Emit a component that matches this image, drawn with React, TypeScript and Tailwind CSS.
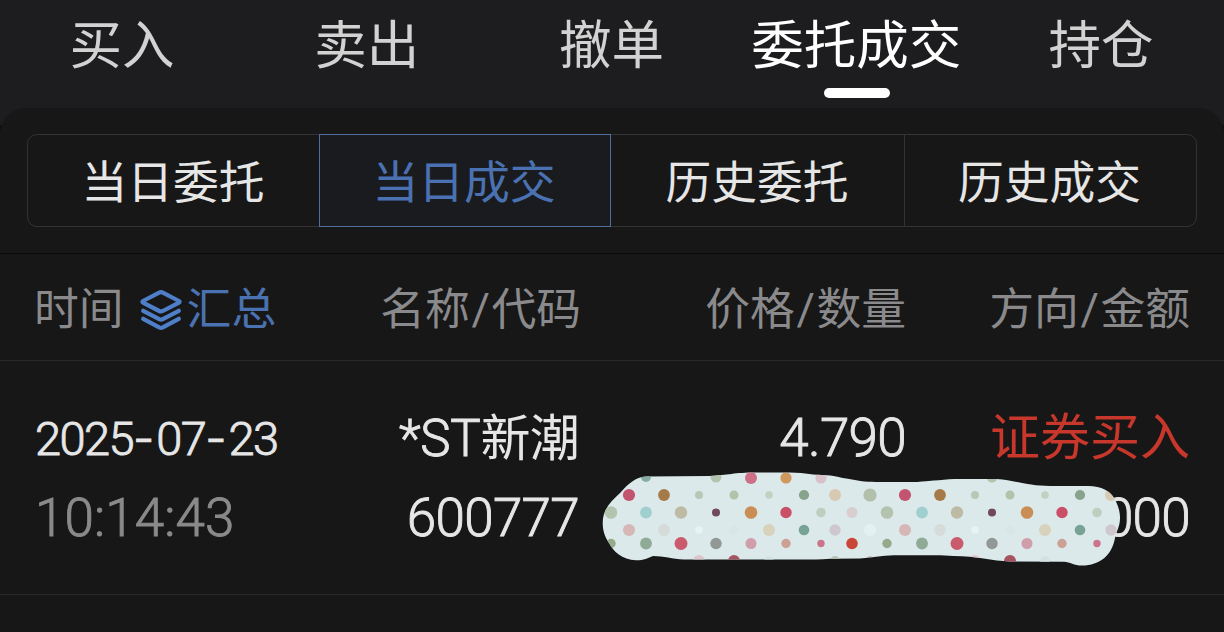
// App.tsx
interface Dot {
  x: number;
  y: number;
  r: number;
  color: string;
}

const tabs = ["买入", "卖出", "撤单", "委托成交", "持仓"];
const filters = ["当日委托", "当日成交", "历史委托", "历史成交"];
const columns = [
  ["名称", "代码"],
  ["价格", "数量"],
  ["方向", "金额"],
];

// one tile of the sticker pattern, repeated every 276px
const TILE = 276;
const dots: Dot[] = [
  { x: 44, y: 5, r: 5, color: "#85ada0" },
  { x: 114, y: 5, r: 5.5, color: "#b5c3ae" },
  { x: 149, y: 6, r: 6, color: "#cc6f87" },
  { x: 184, y: 6, r: 5.6, color: "#cf985c" },
  { x: 219, y: 6, r: 5.6, color: "#d8c0c8" },
  { x: 250, y: 0, r: 6, color: "#d08a94" },
  { x: 27, y: 23, r: 6.1, color: "#c25470" },
  { x: 62, y: 23, r: 5.9, color: "#a67a48" },
  { x: 97, y: 23, r: 4, color: "#b9c7b6" },
  { x: 132, y: 23, r: 4.5, color: "#b2c3ac" },
  { x: 167, y: 23, r: 3.8, color: "#c1d1c2" },
  { x: 202, y: 23, r: 5.1, color: "#87a38c" },
  { x: 233, y: 23, r: 6, color: "#d8cab2" },
  { x: 268, y: 23, r: 6.6, color: "#b2c0ab" },
  { x: 9, y: 40.5, r: 6.3, color: "#b3c3ae" },
  { x: 44, y: 40.5, r: 5.9, color: "#9fd0cf" },
  { x: 79, y: 40.5, r: 6.2, color: "#bdbba4" },
  { x: 114, y: 40.5, r: 4, color: "#704a59" },
  { x: 149, y: 40.5, r: 6.3, color: "#cb8d56" },
  { x: 184, y: 40.5, r: 5.7, color: "#ca5067" },
  { x: 219, y: 40.5, r: 4.8, color: "#bfcfbf" },
  { x: 250, y: 40.5, r: 5.6, color: "#d8ced0" },
  { x: 27, y: 58, r: 6, color: "#d6b7b6" },
  { x: 62, y: 58, r: 5.9, color: "#d6dad9" },
  { x: 97, y: 58, r: 3.8, color: "#e8f3f5" },
  { x: 132, y: 58, r: 4.5, color: "#d7e7e8" },
  { x: 167, y: 58, r: 6, color: "#d8d1bc" },
  { x: 202, y: 58, r: 5.3, color: "#78a296" },
  { x: 233, y: 58, r: 5.7, color: "#cec8ce" },
  { x: 268, y: 58, r: 6, color: "#e4f1f2" },
  { x: 9, y: 71.5, r: 4.7, color: "#98a88a" },
  { x: 44, y: 71.5, r: 5.9, color: "#8faa95" },
  { x: 79, y: 71.5, r: 6.5, color: "#c95b6c" },
  { x: 114, y: 71.5, r: 5.7, color: "#919896" },
  { x: 149, y: 71.5, r: 5.5, color: "#d09daa" },
  { x: 184, y: 71.5, r: 4.7, color: "#cba095" },
  { x: 219, y: 71.5, r: 3.7, color: "#cc7489" },
  { x: 250, y: 71.5, r: 5.8, color: "#c94737" },
  { x: 97, y: 89, r: 5.9, color: "#dbc5ca" },
  { x: 132, y: 89, r: 6, color: "#a5535f" },
  { x: 167, y: 89, r: 4.8, color: "#d3e1df" },
  { x: 233, y: 89, r: 5, color: "#b5c6b3" },
  { x: 268, y: 89, r: 4.5, color: "#a77a76" },
];

function SummaryIcon() {
  return (
    <svg width="42" height="46" viewBox="0 0 42 46" fill="none" stroke="#507fca" strokeWidth="4.2" strokeLinecap="round" strokeLinejoin="round" className="shrink-0">
      <path d="M3 16 19.2 7.600q1.800-.9 3.600 0L39 16q1.200.8 0 1.600L22.800 26q-1.800.9-3.600 0L3 17.600q-1.200-.8 0-1.600Z" />
      <path d="M3.200 25.800 19.200 34.200q1.800.9 3.600 0L38.800 25.800" />
      <path d="M3.200 33.800 19.200 42.400q1.800.9 3.600 0L38.800 33.800" />
    </svg>
  );
}

function Sticker() {
  return (
    <svg width="520" height="96" viewBox="0 0 520 96">
      <defs>
        <clipPath id="sticker">
          <path d="M.7 51C.7 38 8 30 18 21C27 11 33 5.500 44 4.500L108 4C126 3 132 .5 154 .5L188 .5C205 1 210 3 225 3.300C235 4 238 6 250 7.500C262 10 270 10 282 10L315 10C332 9 342 7 358 7L395 7C412 8 425 14 448 14L486 14C500 14 508 19 512 26C516 33 518 39 518 46C518 54 515 58 513 66C510 83 498 93.500 480 93.500C472 93.500 468 90 462 89.700L408 89.500C390 89 374 84 352 84L338 83.300L292 83.300C280 83.500 268 86 258 86.500L228 86.700C218 87.500 210 87.500 200 87.500L82 87.500C70 87 62 84 51 84C46 86 42 88.300 34 88.300C20 88 11 79 7 71C3 65 .7 59 .7 51Z" />
        </clipPath>
      </defs>
      <g clipPath="url(#sticker)">
        <rect width="520" height="96" fill="#dce9eb" />
        {[0, TILE].map((shift) =>
          dots.map((dot) => (
            <circle key={`${shift}-${dot.x}-${dot.y}`} cx={dot.x + shift} cy={dot.y} r={dot.r} fill={dot.color} />
          ))
        )}
      </g>
    </svg>
  );
}

export default function App() {
  return (
    <div className="h-[632px] w-[1224px] overflow-hidden bg-[#0d0d0d] font-['Noto_Sans_CJK_SC',sans-serif] text-[#e6e6e6]">
      <nav className="grid h-[125px] grid-cols-5 bg-[#1d1d1f]">
        {tabs.map((tab) => {
          const active = tab === "委托成交";
          return (
            <div key={tab} className={`flex flex-col items-center whitespace-nowrap text-[52.500px] leading-[83px] ${active ? "text-white" : "text-[#d2d2d2]"}`}>
              <span className="pr-px">{tab}</span>
              {active && <span className="mt-[5px] h-[10px] w-[66px] rounded-[5px] bg-white" />}
            </div>
          );
        })}
      </nav>

      <main className="relative -mt-[17px] h-[524px] rounded-t-[26px] bg-[#171717]">
        <div className="h-[146px] border-b border-[#0b0b0b] px-[27px] pt-[26px]">
          <div className="grid h-[93px] grid-cols-4 rounded-[10px] border border-[#333333]">
            {filters.map((filter, i) => (
              <button
                key={filter}
                className={`whitespace-nowrap pb-[3px] pr-[2px] text-[45.800px] leading-[88px] ${
                  i === 1 ? "-my-px -ml-px mr-px border border-[#506f9f] bg-[#1a1b1f] pr-0 text-[#4a72b2]" : ""
                } ${i === 3 ? "border-l border-[#333333]" : ""}`}
              >
                {filter}
              </button>
            ))}
          </div>
        </div>

        <div className="grid h-[107px] grid-cols-[341px_206px_325px_284px] items-start border-b border-[#2a2a2a] pl-[34px] text-[44.800px] leading-[103px] text-[#8a8a8c]">
          <div className="flex items-center">
            <span>时间</span>
            <span className="ml-[16px] flex items-center gap-[5px] text-[#4b72b0]">
              <span className="pt-[4px]">
                <SummaryIcon />
              </span>
              汇总
            </span>
          </div>
          {columns.map(([top, bottom]) => (
            <span key={top} className="whitespace-nowrap text-right">
              {top}
              <span className="px-[1.500px] font-['Roboto']">/</span>
              {bottom}
            </span>
          ))}
        </div>

        <div className="relative -mt-px h-[235px] border-b border-[#2a2a2a]">
          <div className="grid grid-cols-[340px_204px_327px_284px] whitespace-nowrap pl-[35px] pt-[39px] font-['Roboto','Noto_Sans_CJK_SC',sans-serif] text-[53px] leading-[79px] tracking-[-0.700px]">
            <span className="-mt-px text-[47px] font-light tracking-[-1.600px] [-webkit-text-stroke:0.9px]">
              2025<span className="font-['Inter'] tracking-[2px]">-</span>07<span className="font-['Inter'] tracking-[2px]">-</span>23
            </span>
            <span className="text-right text-[50px]">
              <span className="text-[51px] font-light tracking-[-0.300px] [-webkit-text-stroke:0.9px]">*ST</span>新潮
            </span>
            <span className="text-right font-light [-webkit-text-stroke:0.9px]">4.790</span>
            <span className="text-right text-[50px] tracking-normal text-[#c8372b]">证券买入</span>
            <span className="font-light tracking-[0.100px] text-[#8a8a8c] [-webkit-text-stroke:0.9px]">10:14:43</span>
            <span className="text-right font-light [-webkit-text-stroke:0.9px]">600777</span>
            <span />
            <span className="text-right font-light [-webkit-text-stroke:0.9px]">000</span>
          </div>
          <div className="absolute left-[602px] top-[112px]">
            <Sticker />
          </div>
        </div>
      </main>
    </div>
  );
}
